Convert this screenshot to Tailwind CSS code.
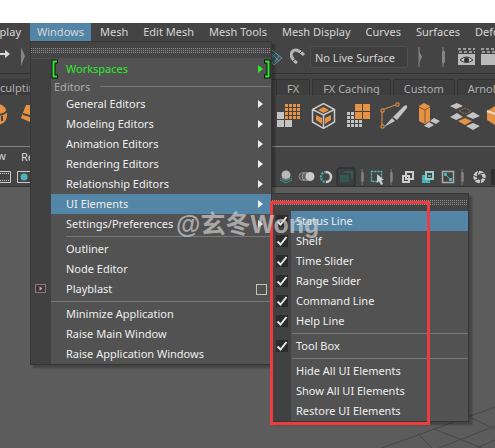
<!DOCTYPE html>
<html lang="en">
<head>
<meta charset="utf-8">
<meta name="viewport" content="width=device-width, initial-scale=1">
<title>Windows menu</title>
<script src="https://cdn.jsdelivr.net/npm/@tailwindcss/browser@4"></script>
</head>
<body class="bg-white pt-[23px] h-screen overflow-hidden font-['Noto_Sans','Noto_Sans_CJK_SC',sans-serif] text-[11px] leading-[18px] text-[#d6d6d6] whitespace-nowrap">
<svg class="absolute size-0">
  <defs>
    <pattern id="dots" width="2" height="2" patternUnits="userSpaceOnUse"><rect width="1" height="1" fill="#929292"/></pattern>
    <symbol id="arrow" viewBox="0 0 5 8"><path d="M0 0L5 4L0 8Z" fill="currentColor"/></symbol>
    <symbol id="tick" viewBox="0 0 12 12"><path d="M1.5 6.5L4.5 9.5L10.5 2" fill="none" stroke="#e6e6e6" stroke-width="2"/></symbol>
    <symbol id="grip" viewBox="0 0 5 20"><path d="M2 0V20" stroke="#858585"/><path d="M1 5L2.5 3L4 5V15L2.5 17L1 15Z" fill="#858585"/></symbol>
  </defs>
</svg>

<div class="flex h-full flex-col overflow-hidden bg-[#444444]">
  <nav class="flex h-[18px] shrink-0 gap-[3px] overflow-hidden">
    <button class="flex w-[27px] shrink-0 justify-end overflow-hidden pr-1.5">Display</button>
    <button class="bg-[#5285a6] px-[7px]">Windows</button>
    <button class="px-1.5">Mesh</button>
    <button class="px-1.5">Edit Mesh</button>
    <button class="px-1.5">Mesh Tools</button>
    <button class="px-1.5">Mesh Display</button>
    <button class="px-1.5">Curves</button>
    <button class="px-1.5">Surfaces</button>
    <button class="px-1.5">Deform</button>
  </nav>

  <div class="flex h-8 shrink-0 items-center overflow-hidden">
    <svg class="h-5 w-[30px] shrink-0" viewBox="0 0 30 20"><path d="M0 7H6" stroke="#d8d8d8" stroke-width="2"/><path d="M5 3L10 7L5 11Z" fill="#d8d8d8"/><path d="M21 0L25 9L21 19Z" fill="#858585"/></svg>
    <div class="w-[240px] shrink-0"></div>
    <svg class="h-5 w-4 shrink-0" viewBox="0 0 16 20"><path d="M-3 9L2 3L12 11L4 18Z" fill="#35575a" stroke="#788f91"/><path d="M0 13L5 7M4 16L9 9M1 6L9 14" stroke="#5c9497" fill="none"/></svg>
    <svg class="ml-1 h-5 w-4 shrink-0" viewBox="0 0 16 20"><path d="M7 16Q-1 10 2 5Q6 0 14 8" fill="none" stroke="#b5b5b5" stroke-width="3"/><path d="M3 14L7 11M9 7L13 3" stroke="#444"/></svg>
    <input aria-label="Live surface" value="No Live Surface" class="ml-1 h-[22px] w-[98px] shrink-0 rounded-[2px] border border-[#505050] bg-[#3f3f3f] px-1 text-[#d6d6d6]">
    <svg class="ml-[10px] h-5 w-[6px] shrink-0" viewBox="0 0 6 20"><path d="M1 0V20" stroke="#858585"/><path d="M1 4L4 10L1 16Z" fill="#858585"/></svg>
    <svg class="ml-[17px] h-5 w-[5px] shrink-0"><use href="#grip"/></svg>
    <svg class="ml-[12px] h-[18px] w-[17px] shrink-0" viewBox="0 0 17 18"><path d="M0 1H17M1 4H17" stroke="#bbb" stroke-width="1.5" stroke-dasharray="3 2"/><path d="M0 6H17V17H0Z" fill="#bbb"/><path d="M2 12Q8.500 6 15 12Q8.500 17 2 12Z" fill="#ccc" stroke="#333"/><circle cx="8.500" cy="12" r="2.500" fill="#333"/></svg>
    <svg class="ml-[6px] h-[18px] w-[17px] shrink-0" viewBox="0 0 17 18"><path d="M0 1H17M1 4H17" stroke="#bbb" stroke-width="1.5" stroke-dasharray="3 2"/><path d="M0 6H17V17H0Z" fill="#bbb"/></svg>
  </div>

  <div class="flex h-[22px] shrink-0 items-stretch overflow-hidden border-t border-[#333] pt-[5px] text-[#b0b0b0]">
    <button class="flex w-[30px] shrink-0 overflow-hidden bg-[#3b3b3b]"><span class="-ml-[6px]">Sculpting</span></button>
    <div class="w-[246px] shrink-0 border-t border-[#333]"></div>
    <button class="mr-0.5 shrink-0 border border-b-0 border-[#333] bg-[#3e3e3e] px-2.5">FX</button>
    <button class="mr-0.5 shrink-0 border border-b-0 border-[#333] bg-[#3e3e3e] px-2.5">FX Caching</button>
    <button class="mr-0.5 shrink-0 border border-b-0 border-[#333] bg-[#3e3e3e] px-2.5">Custom</button>
    <button class="shrink-0 border border-b-0 border-[#333] bg-[#3e3e3e] px-2.5">Arnold</button>
  </div>

  <div class="flex h-[52px] shrink-0 items-start overflow-hidden border-b border-[#858585] pt-2">
    <svg class="h-7 w-[30px] shrink-0" viewBox="0 0 30 28"><path d="M-8 1Q5 -1 7 10Q8 20 -2 22H-8Z" fill="#e59244"/><path d="M-3 12Q4 12 7 8M2 13V18" fill="none" stroke="#444" stroke-width="2"/><path d="M26 2H30V19L21 15Z" fill="#e59244"/><path d="M23 11L30 13" stroke="#444" stroke-width="2"/></svg>
    <div class="w-[246px] shrink-0"></div>
    <div class="flex shrink-0 gap-[7px]">
      <svg class="size-7" viewBox="0 0 28 28"><path d="M9 1H24V16H9Z" fill="#e59244"/><path d="M12.500 1V16M16.500 1V16M20.500 1V16M9 4.500H24M9 8.500H24M9 12.500H24" stroke="#444"/><path d="M1 9H8V16H1ZM1 17H8V24H1ZM9 17H16V24H9Z" fill="#c4c4c4"/></svg>
      <svg class="size-7" viewBox="0 0 28 28"><path d="M12.500 0.500L23.500 6.500V19L12.500 25.500L1.500 19V6.500ZM1.500 6.500L12.500 12L23.500 6.500M12.500 12V25.500" fill="none" stroke="#c9c9c9" stroke-width="1.500"/><path d="M12.500 4L18 7L12.500 10L7 7ZM5 12L11 15V21L5 17ZM20 12L14 15V21L20 17Z" fill="#e59244"/></svg>
      <svg class="size-7" viewBox="0 0 28 28"><path d="M9 1H16V8H9ZM17 1H24V8H17ZM9 9H16V16H9ZM17 9H24V16H17Z" fill="#e59244"/><path d="M1 9H8V17H16V24H1Z" fill="#c4c4c4"/><path d="M4.500 9V24M8.500 9V24M12.500 17V24M1 12.500H8M1 16.500H16M1 20.500H16" stroke="#444"/></svg>
      <svg class="size-7 overflow-visible" viewBox="0 0 28 28"><path d="M1 24V7L17 1" fill="none" stroke="#e59244"/><path d="M0 6H3V9H0ZM15 0H18V3H15ZM0 22H3V25H0Z" fill="#444" stroke="#e59244"/><path d="M3 24L11 15L14 18ZM12 14L23 3Q27 1 26 5L16 17Z" fill="#c4c4c4"/></svg>
      <svg class="size-7" viewBox="0 0 28 28"><path d="M3 3L8 0L14 3V18L9 21L3 18Z" fill="#e59244"/><path d="M3 4L9 7L14 4M9 7V20" fill="none" stroke="#8b5525"/><path d="M14 18L18 15L24 18L20 21ZM8 23L13 19L18 22L13 25Z" fill="#c4c4c4"/></svg>
      <svg class="size-7 overflow-visible" viewBox="0 0 28 28"><path d="M-1 3L6 0L12 3L5 6ZM-1 14L6 10L12 14L5 17ZM15 13L22 9L29 13L22 16ZM15 23L22 20L29 23L22 27Z" fill="#c4c4c4"/><path d="M7 18L14 15L21 18L14 22Z" fill="#e59244"/><path d="M8 8L14 5L20 8L14 11Z" fill="none" stroke="#a06936" stroke-dasharray="2 1"/></svg>
      <svg class="size-7" viewBox="0 0 28 28"><path d="M1 8L12 1L28 4V24L14 25L1 17Z" fill="#e59244"/><path d="M1 8L12 12L28 8" fill="none" stroke="#ddd" stroke-width="2"/></svg>
    </div>
  </div>

  <div class="flex h-5 shrink-0"><button class="flex w-[9px] shrink-0 justify-end overflow-hidden pr-[3px]">View</button><button class="ml-3">Renderer</button></div>

  <div class="flex h-5 shrink-0 items-center overflow-hidden border-b border-[#353535]">
    <svg class="h-4 w-[30px] shrink-0" viewBox="0 0 30 16"><path d="M0 2.500H10.500V13.500H0" fill="none" stroke="#ccc"/><path d="M0 4.500H10M0 11.500H10" stroke="#ccc" stroke-dasharray="1 1"/><path d="M31 2.500H17.500V13.500H31" fill="none" stroke="#ccc"/><circle cx="24" cy="8" r="3.500" fill="#4fb5b8"/></svg>
    <div class="w-[246px] shrink-0"></div>
    <div class="flex shrink-0 items-center">
      <svg class="size-5" viewBox="0 0 20 20"><path d="M4 11L10 14L16 11M4 13L10 16L16 13" fill="none" stroke="#3d8f8c"/><circle cx="10" cy="8" r="4.500" fill="#b9b9b9"/><path d="M6 11Q10 14 14 11" stroke="#777" fill="none"/></svg>
      <svg class="size-5" viewBox="0 0 20 20"><circle cx="7" cy="9.500" r="4" fill="#555" stroke="#888"/><circle cx="10" cy="9.500" r="4" fill="#666" stroke="#999"/><circle cx="14" cy="9.500" r="4.500" fill="#c9c9c9"/></svg>
      <svg class="size-5" viewBox="0 0 20 20"><path d="M10 5A5 5 0 0 0 10 15" fill="none" stroke="#46a5a5" stroke-width="2.500" stroke-dasharray="2 1"/><path d="M10 5A5 5 0 0 1 10 15" fill="none" stroke="#ccc" stroke-width="2.500"/></svg>
      <svg class="size-5" viewBox="0 0 20 20"><rect x="1" y="1" width="18" height="18" rx="2" fill="#394140" stroke="#292929"/><path d="M4 8H13V15H4Z" fill="#365650"/><path d="M8 5H16V12" fill="none" stroke="#3d5750" stroke-width="2"/></svg>
      <svg class="mx-1 h-4 w-[5px]"><use href="#grip"/></svg>
      <svg class="size-5" viewBox="0 0 20 20"><path d="M2.500 4.500H12.500V14.500H2.500Z" fill="none" stroke="#4ebcbc" stroke-width="1.500" stroke-dasharray="2 1"/><path d="M8 7L15 13L12 13L14 17L12 18L10 14L8 16Z" fill="#ccc"/></svg>
      <svg class="h-4 w-[5px]"><use href="#grip"/></svg>
      <svg class="ml-1 size-5" viewBox="0 0 20 20"><path d="M8 5H15V12H8ZM5 9H11V15H5Z" fill="none" stroke="#ccc" stroke-width="2"/></svg>
      <svg class="size-5" viewBox="0 0 20 20"><path d="M4 8H12V16H4Z" fill="#46b5b5"/><path d="M8 5H15V12H8Z" fill="#444" stroke="#9ecaca" stroke-width="2"/><path d="M10 8H13V10H10Z" fill="#46b5b5"/></svg>
      <svg class="size-5" viewBox="0 0 20 20"><path d="M4.500 4.500H15.500V15.500H4.500Z" fill="none" stroke="#aaa" stroke-width="1.500"/><path d="M6 6H9V9H6ZM11 11H14V14H11Z" fill="#46b5b5"/><path d="M8 8L12 12" stroke="#46b5b5"/></svg>
      <svg class="ml-0.5 h-4 w-[5px]"><use href="#grip"/></svg>
      <svg class="ml-1 size-5" viewBox="0 0 20 20"><circle cx="10.500" cy="10" r="4.500" fill="none" stroke="#c9c9c9" stroke-width="3.500"/><path d="M10 3L8 8M16 6L11 7M17 12L12 10M11 17L12 12M4 14L9 12M3 8L8 10" stroke="#444"/></svg>
      <span class="ml-0.5 h-4 w-5 bg-[#303030]"></span>
    </div>
  </div>

  <main class="flex min-h-0 flex-1 flex-col items-end justify-end bg-[#5c5c5c]">
    <svg class="h-[55px] w-[135px]" viewBox="0 0 135 55"><path d="M22 55L135 14M79 55L135 33M74 36L122 55M107 23L135 36M58 41L72 55M117 55L135 47" fill="none" stroke="#484848"/></svg>
  </main>
</div>

<!-- Windows menu -->
<div role="menu" aria-label="Windows" class="absolute top-[41px] left-[30px] w-[242px] border border-[#363636] bg-[linear-gradient(90deg,#414141_20px,#525252_20px)] text-[#eeeeee] shadow-[3px_3px_2px_#0004]">
  <div class="h-[17px] border-b border-[#505050] bg-[#444444] pt-[6px]"><svg class="h-[5px] w-full"><rect width="100%" height="5" fill="url(#dots)"/></svg></div>
  <div class="flex flex-col pl-5 [&>button]:flex [&>button]:h-5 [&>button]:items-center [&>button]:pl-[15px] [&>button]:pr-2">
    <button role="menuitem" class="relative text-[#2bed2b]">Workspaces<svg class="ml-auto h-2 w-[5px]"><use href="#arrow"/></svg>
      <svg class="absolute top-0 left-0 h-5 w-[7px]" viewBox="0 0 7 20"><path d="M7 2.500H2.500V17.500H7" fill="none" stroke="#111" stroke-width="4"/><path d="M6 2.500H2.500V17.500H6" fill="none" stroke="#2bed2b" stroke-width="2"/></svg>
      <svg class="absolute top-0 right-0 h-5 w-[7px]" viewBox="0 0 7 20"><path d="M0 2.500H4.500V17.500H0" fill="none" stroke="#111" stroke-width="4"/><path d="M1 2.500H4.500V17.500H1" fill="none" stroke="#2bed2b" stroke-width="2"/></svg>
    </button>
    <div class="flex h-[15px] items-center gap-2.5 pl-[3px] text-[#aaaaaa]">Editors<span class="h-px flex-1 bg-[#777777]"></span></div>
    <button role="menuitem">General Editors<svg class="ml-auto h-2 w-[5px]"><use href="#arrow"/></svg></button>
    <button role="menuitem">Modeling Editors<svg class="ml-auto h-2 w-[5px]"><use href="#arrow"/></svg></button>
    <button role="menuitem">Animation Editors<svg class="ml-auto h-2 w-[5px]"><use href="#arrow"/></svg></button>
    <button role="menuitem">Rendering Editors<svg class="ml-auto h-2 w-[5px]"><use href="#arrow"/></svg></button>
    <button role="menuitem">Relationship Editors<svg class="ml-auto h-2 w-[5px]"><use href="#arrow"/></svg></button>
    <button role="menuitem" class="bg-[#5285a6]">UI Elements<svg class="ml-auto h-2 w-[5px]"><use href="#arrow"/></svg></button>
    <button role="menuitem">Settings/Preferences<svg class="ml-auto h-2 w-[5px]"><use href="#arrow"/></svg></button>
    <div class="mt-[2px] mb-[2px] ml-[15px] h-px bg-[#777777]"></div>
    <button role="menuitem">Outliner</button>
    <button role="menuitem">Node Editor</button>
    <button role="menuitem" class="relative">Playblast<svg class="absolute top-[5px] -left-4 h-[9px] w-[11px]" viewBox="0 0 11 9"><rect x=".5" y=".5" width="10" height="8" fill="#403036" stroke="#8d7c80"/><path d="M1 2.500H10M1 6.500H10" stroke="#5e444b" stroke-dasharray="1 1"/><path d="M4.500 2.500L7.500 4.500L4.500 6.500Z" fill="#c8b8b0"/></svg><span class="-mr-1 ml-auto size-[11px] border border-[#c4c4b4]"></span></button>
    <div class="mt-[2px] mb-[2px] h-px bg-[#777777]"></div>
    <button role="menuitem">Minimize Application</button>
    <button role="menuitem">Raise Main Window</button>
    <button role="menuitem">Raise Application Windows</button>
  </div>
</div>

<!-- UI Elements submenu -->
<div role="menu" aria-label="UI Elements" class="absolute top-[193px] left-[271px] w-[198px] border border-[#363636] bg-[linear-gradient(90deg,#414141_19px,#525252_19px)] text-[#eeeeee] shadow-[3px_3px_2px_#0004]">
  <div class="h-[17px] bg-[#444444] pt-[6px]"><svg class="h-[5px] w-full"><rect width="100%" height="5" fill="url(#dots)"/></svg></div>
  <div class="flex flex-col [&>label]:flex [&>label]:h-5 [&>label]:items-center [&>button]:h-5 [&>button]:pl-6 [&>button]:text-left">
    <label class="bg-[linear-gradient(90deg,transparent_19px,#5285a6_19px)]"><span class="relative mr-2 ml-1 size-3"><input type="checkbox" checked class="block size-3 appearance-none bg-[#2b2b2b]"><svg class="pointer-events-none absolute inset-0 size-3"><use href="#tick"/></svg></span>Status Line</label>
    <label><span class="relative mr-2 ml-1 size-3"><input type="checkbox" checked class="block size-3 appearance-none bg-[#2b2b2b]"><svg class="pointer-events-none absolute inset-0 size-3"><use href="#tick"/></svg></span>Shelf</label>
    <label><span class="relative mr-2 ml-1 size-3"><input type="checkbox" checked class="block size-3 appearance-none bg-[#2b2b2b]"><svg class="pointer-events-none absolute inset-0 size-3"><use href="#tick"/></svg></span>Time Slider</label>
    <label><span class="relative mr-2 ml-1 size-3"><input type="checkbox" checked class="block size-3 appearance-none bg-[#2b2b2b]"><svg class="pointer-events-none absolute inset-0 size-3"><use href="#tick"/></svg></span>Range Slider</label>
    <label><span class="relative mr-2 ml-1 size-3"><input type="checkbox" checked class="block size-3 appearance-none bg-[#2b2b2b]"><svg class="pointer-events-none absolute inset-0 size-3"><use href="#tick"/></svg></span>Command Line</label>
    <label><span class="relative mr-2 ml-1 size-3"><input type="checkbox" checked class="block size-3 appearance-none bg-[#2b2b2b]"><svg class="pointer-events-none absolute inset-0 size-3"><use href="#tick"/></svg></span>Help Line</label>
    <div class="mt-[2px] mb-[2px] ml-5 h-px bg-[#777777]"></div>
    <label><span class="relative mr-2 ml-1 size-3"><input type="checkbox" checked class="block size-3 appearance-none bg-[#2b2b2b]"><svg class="pointer-events-none absolute inset-0 size-3"><use href="#tick"/></svg></span>Tool Box</label>
    <div class="mt-[2px] mb-[2px] ml-5 h-px bg-[#777777]"></div>
    <button role="menuitem">Hide All UI Elements</button>
    <button role="menuitem">Show All UI Elements</button>
    <button role="menuitem">Restore UI Elements</button>
  </div>
</div>

<div class="pointer-events-none absolute top-[201px] left-[270px] h-[224px] w-[160px] border-3 border-[#ed3b3f]"></div>
<div class="pointer-events-none absolute top-[208px] left-[176px] font-['Liberation_Sans','Noto_Sans_CJK_SC',sans-serif] text-[25px] leading-8 font-bold text-[#d0d0d0]/70">@玄冬Wong</div>
</body>
</html>
